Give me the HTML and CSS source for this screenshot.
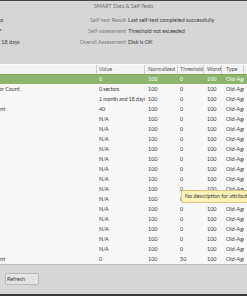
FILE: index.html
```html
<!DOCTYPE html>
<html>
<head>
<meta charset="utf-8">
<link rel="stylesheet" href="styles.css">
</head>
<body>
<div class="window">
  <div class="edge-top"></div>
  <div class="titlebar">SMART Data &amp; Self-Tests</div>
  <div class="info">
    <div class="lbl">Updated</div><div class="val">4 minutes ago</div>
    <div class="lbl">Self-test Result</div><div class="val">Last self-test completed successfully</div>
    <div class="lbl">Temperature</div><div class="val">36° C / 97° F</div>
    <div class="lbl">Self-assessment</div><div class="val">Threshold not exceeded</div>
    <div class="lbl">Powered On</div><div class="val">1 month and 18 days</div>
    <div class="lbl">Overall Assessment</div><div class="val">Disk is OK</div>
  </div>
  <div class="table">
    <div class="row head">
      <div class="c">Attribute</div><div class="c">Value</div><div class="c">Normalized</div><div class="c">Threshold</div><div class="c">Worst</div><div class="c">Type</div><div class="c">Updates</div>
    </div>
    <div class="row sel"><div class="c">Read Error Rate</div><div class="c">0</div><div class="c">100</div><div class="c">0</div><div class="c">100</div><div class="c">Old-Age</div><div class="c">Online</div></div>
    <div class="row"><div class="c">Reallocated Sector Count</div><div class="c">0 sectors</div><div class="c">100</div><div class="c">0</div><div class="c">100</div><div class="c">Old-Age</div><div class="c">Online</div></div>
    <div class="row"><div class="c">Power-On Hours</div><div class="c">1 month and 18 days</div><div class="c">100</div><div class="c">0</div><div class="c">100</div><div class="c">Old-Age</div><div class="c">Online</div></div>
    <div class="row"><div class="c">Power Cycle Count</div><div class="c">40</div><div class="c">100</div><div class="c">0</div><div class="c">100</div><div class="c">Old-Age</div><div class="c">Online</div></div>
    <div class="row"><div class="c">Attribute 148</div><div class="c">N/A</div><div class="c">100</div><div class="c">0</div><div class="c">100</div><div class="c">Old-Age</div><div class="c">Online</div></div>
    <div class="row"><div class="c">Attribute 149</div><div class="c">N/A</div><div class="c">100</div><div class="c">0</div><div class="c">100</div><div class="c">Old-Age</div><div class="c">Online</div></div>
    <div class="row"><div class="c">Attribute 150</div><div class="c">N/A</div><div class="c">100</div><div class="c">0</div><div class="c">100</div><div class="c">Old-Age</div><div class="c">Online</div></div>
    <div class="row"><div class="c">Attribute 151</div><div class="c">N/A</div><div class="c">100</div><div class="c">0</div><div class="c">100</div><div class="c">Old-Age</div><div class="c">Online</div></div>
    <div class="row"><div class="c">Attribute 159</div><div class="c">N/A</div><div class="c">100</div><div class="c">0</div><div class="c">100</div><div class="c">Old-Age</div><div class="c">Online</div></div>
    <div class="row"><div class="c">Attribute 160</div><div class="c">N/A</div><div class="c">100</div><div class="c">0</div><div class="c">100</div><div class="c">Old-Age</div><div class="c">Online</div></div>
    <div class="row"><div class="c">Attribute 161</div><div class="c">N/A</div><div class="c">100</div><div class="c">0</div><div class="c">100</div><div class="c">Old-Age</div><div class="c">Online</div></div>
    <div class="row"><div class="c">Attribute 163</div><div class="c">N/A</div><div class="c">100</div><div class="c">0</div><div class="c">100</div><div class="c">Old-Age</div><div class="c">Online</div></div>
    <div class="row"><div class="c">Attribute 164</div><div class="c">N/A</div><div class="c">100</div><div class="c">0</div><div class="c">100</div><div class="c">Old-Age</div><div class="c">Online</div></div>
    <div class="row"><div class="c">Attribute 165</div><div class="c">N/A</div><div class="c">100</div><div class="c">0</div><div class="c">100</div><div class="c">Old-Age</div><div class="c">Online</div></div>
    <div class="row"><div class="c">Attribute 166</div><div class="c">N/A</div><div class="c">100</div><div class="c">0</div><div class="c">100</div><div class="c">Old-Age</div><div class="c">Online</div></div>
    <div class="row"><div class="c">Attribute 167</div><div class="c">N/A</div><div class="c">100</div><div class="c">0</div><div class="c">100</div><div class="c">Old-Age</div><div class="c">Online</div></div>
    <div class="row"><div class="c">Attribute 168</div><div class="c">N/A</div><div class="c">100</div><div class="c">0</div><div class="c">100</div><div class="c">Old-Age</div><div class="c">Online</div></div>
    <div class="row"><div class="c">Attribute 169</div><div class="c">N/A</div><div class="c">100</div><div class="c">0</div><div class="c">100</div><div class="c">Old-Age</div><div class="c">Online</div></div>
    <div class="row"><div class="c">Program Fail Count</div><div class="c">0</div><div class="c">100</div><div class="c">50</div><div class="c">100</div><div class="c">Old-Age</div><div class="c">Online</div></div>
  </div>
  <div class="footer"><button class="btn">Refresh</button></div>
  <div class="edge-bottom"></div>
  <div class="tooltip">No description for attribute 148</div>
</div>
</body>
</html>
```
FILE: styles.css
```css
html, body {
  margin: 0;
  padding: 0;
  background: #d6d6d6;
}
.window {
  position: relative;
  width: 247px;
  height: 296px;
  overflow: hidden;
  background: #d6d6d6;
  font-family: Lato, "Noto Sans", sans-serif;
  font-size: 5.4px;
  color: #3c3c3c;
  display: flex;
  flex-direction: column;
}
.edge-top {
  height: 1px;
  background: #444444;
  flex: none;
}
.titlebar {
  height: 11px;
  line-height: 11px;
  text-align: center;
  color: #6e6e6e;
  flex: none;
}
.info {
  flex: none;
  margin-top: 3px;
  margin-left: -80px;
  display: grid;
  grid-template-columns: 50px 100px 58px 130px;
  grid-auto-rows: 11px;
  line-height: 11px;
  white-space: nowrap;
}
.info .lbl {
  text-align: right;
  color: #7c7c7c;
  padding-right: 3px;
}
.info .val {
  color: #3a3a3a;
}
.info .lbl:nth-child(4n+3) {
  padding-right: 2px;
}
.table {
  flex: none;
  margin-top: 16px;
  margin-left: -43px;
  background: #f7f7f7;
  border-bottom: 1px solid #bdbdbd;
}
.row {
  display: grid;
  grid-template-columns: 140px 48px 33px 26px 18px 22px 40px;
  height: 10px;
  line-height: 10px;
  white-space: nowrap;
}
.row .c {
  padding-left: 3px;
  overflow: hidden;
}
.row .c:nth-child(2) {
  padding-left: 2px;
  letter-spacing: -0.15px;
}
.head .c:nth-child(2) { letter-spacing: 0; }
.row .c:nth-child(4) { padding-left: 2px; }
.row .c:nth-child(6) { padding-left: 4px; }
.head {
  background: #f3f3f3;
  color: #555555;
  border-top: 1px solid #fbfbfb;
  height: 9px;
  line-height: 9px;
}
.head .c + .c {
  border-left: 1px solid #cfcfcf;
  margin-left: -1px;
}
.sel {
  background: #8db56b;
  color: #ffffff;
  box-shadow: inset 0 1px 0 #7da85c;
}
.footer {
  flex: 1;
  padding: 8px 0 0 5px;
}
.btn {
  width: 34px;
  height: 12px;
  padding: 0 0 0 1px;
  margin: 0;
  font: inherit;
  color: #3c3c3c;
  text-align: left;
  background: #e4e4e4;
  border: 1px solid #b8b8b8;
  border-radius: 2px;
}
.edge-bottom {
  height: 2px;
  background: #3d3d3d;
  flex: none;
}
.tooltip {
  position: absolute;
  left: 181px;
  top: 190px;
  height: 11px;
  line-height: 11px;
  padding: 0 3px;
  white-space: nowrap;
  background: #fbf2b8;
  border: 1px solid #d8c67c;
  border-radius: 2px;
  color: #3a3a3a;
}
```
